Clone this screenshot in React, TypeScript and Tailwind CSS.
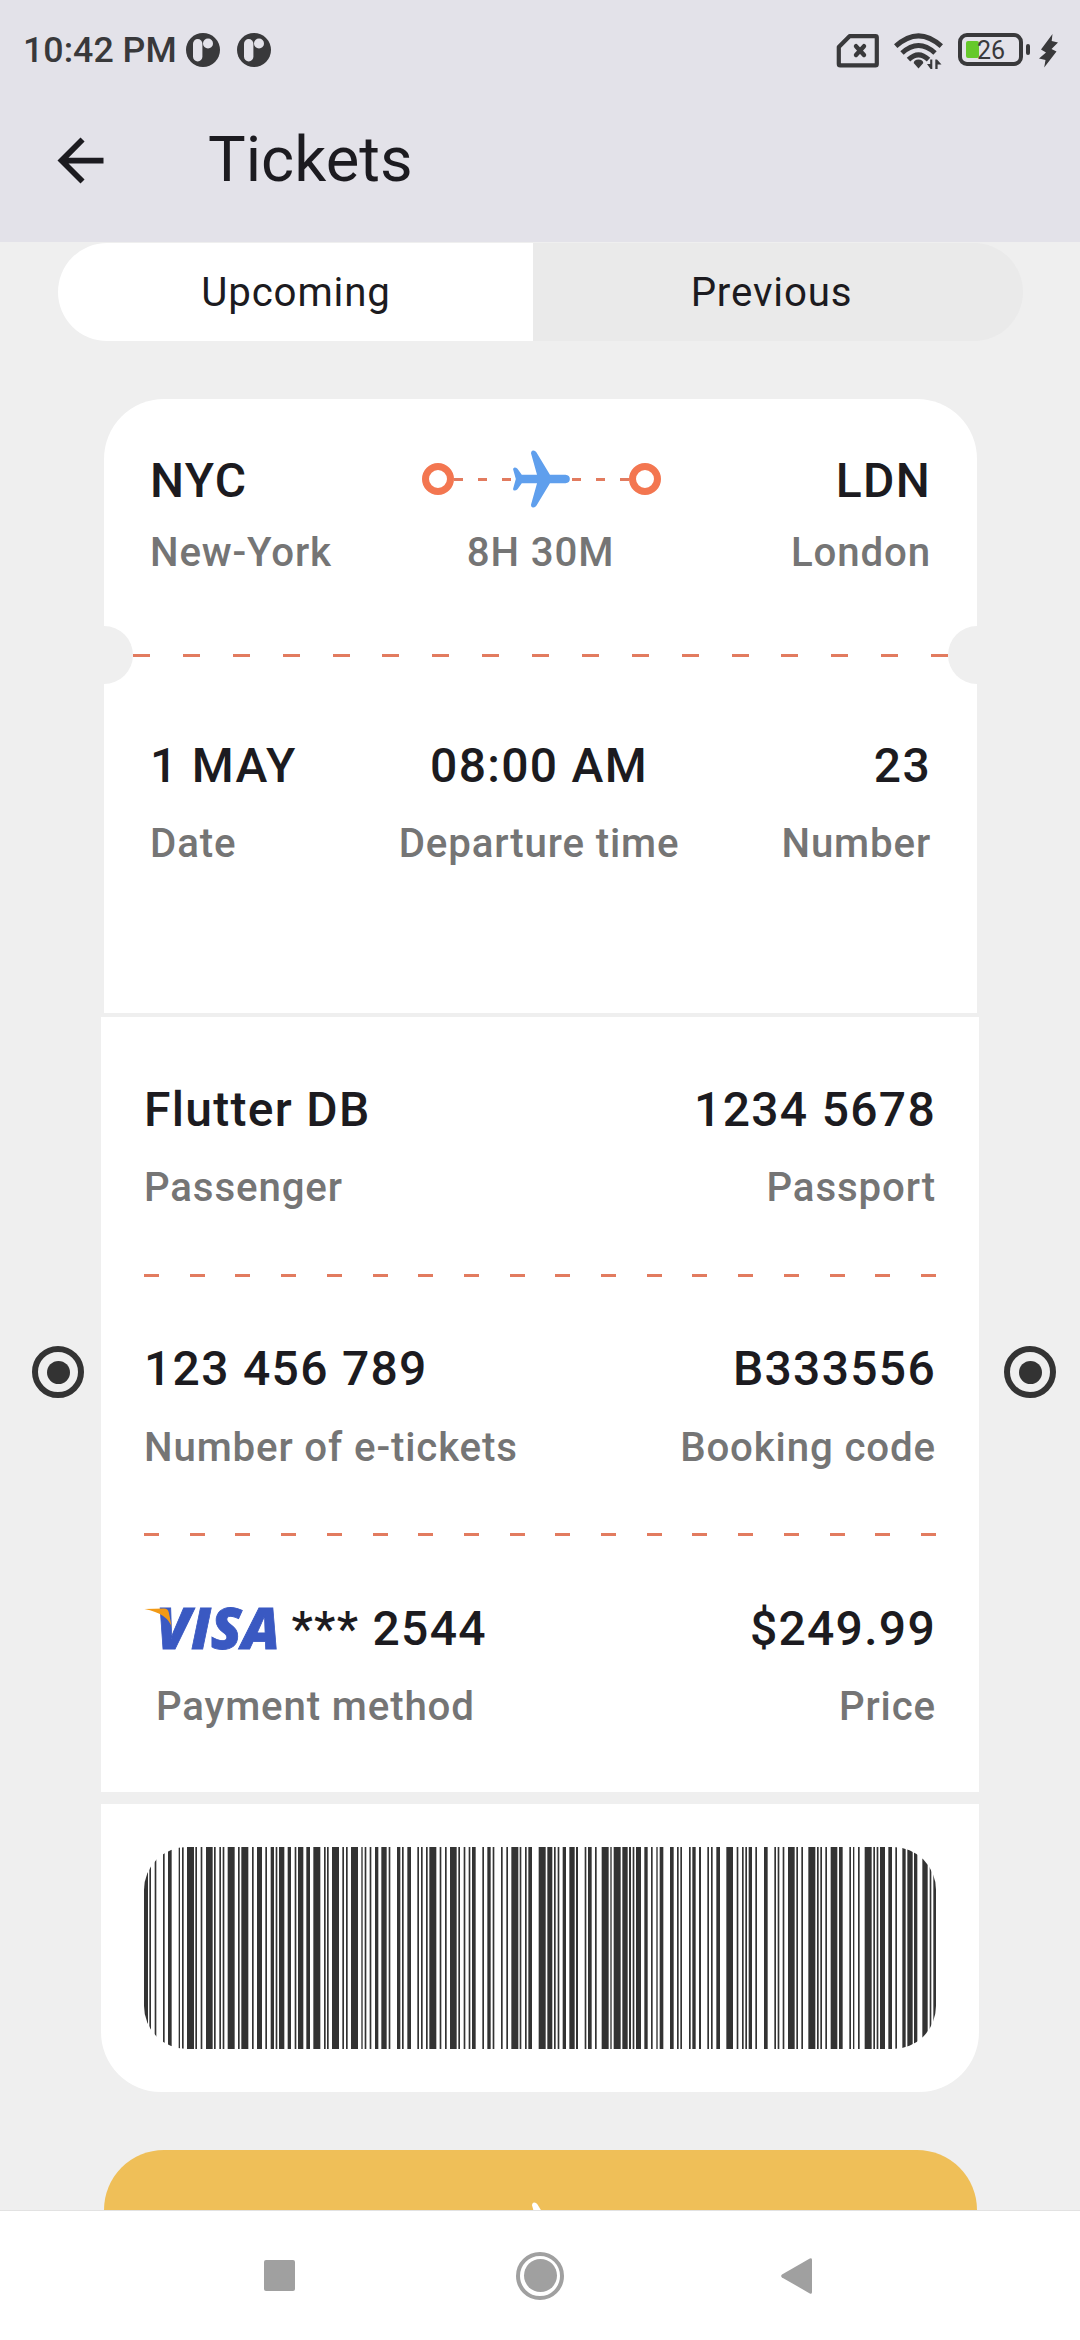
import React from "react";

const PLANE =
  "M158 73 H111 L70 5 Q66 -1 59 0 Q53 3 54 9 L72 73 H26 L13 55 Q9 51 4 51 Q-1 53 0 57 L8 86 L0 115 Q-1 120 4 121 Q9 121 13 117 L26 99 H72 L54 163 Q53 170 59 172 Q66 173 70 167 L111 99 H158 Q171 97 171 86 Q171 74 158 73Z";

/** Barcode bars as [start, width], in thirds of a pixel. */
const BARS: [number, number][] = [
  [0, 12], [16, 5], [32, 5], [57, 5], [72, 11], [104, 4], [114, 5], [129, 21], [154, 5], [170, 5], [186, 20],
  [210, 5], [226, 5], [236, 5], [251, 21], [282, 5], [292, 21], [324, 5], [339, 15], [364, 5], [380, 10],
  [395, 5], [405, 16], [431, 10], [452, 5], [462, 16], [487, 11], [508, 21], [540, 5], [549, 5], [564, 21],
  [595, 5], [606, 5], [621, 21], [652, 4], [662, 5], [677, 5], [693, 10], [712, 16], [734, 5], [759, 10],
  [774, 5], [790, 11], [820, 5], [831, 5], [846, 5], [856, 21], [887, 5], [903, 5], [918, 20], [943, 5],
  [959, 5], [974, 5], [984, 11], [1015, 5], [1030, 10], [1046, 5], [1071, 5], [1087, 5], [1102, 21], [1127, 5],
  [1143, 5], [1153, 11], [1184, 21], [1210, 15], [1230, 5], [1241, 5], [1256, 10], [1276, 16], [1296, 6],
  [1322, 5], [1332, 11], [1353, 5], [1373, 21], [1399, 4], [1409, 21], [1435, 16], [1455, 6], [1466, 5],
  [1476, 15], [1501, 10], [1521, 5], [1537, 4], [1547, 11], [1578, 11], [1599, 5], [1609, 5], [1635, 5],
  [1645, 10], [1665, 6], [1690, 5], [1701, 5], [1717, 11], [1747, 20], [1778, 5], [1794, 5], [1804, 5],
  [1814, 10], [1834, 5], [1860, 11], [1891, 5], [1901, 5], [1916, 5], [1932, 20], [1957, 5], [1972, 5],
  [1993, 21], [2019, 5], [2029, 5], [2044, 5], [2060, 20], [2085, 11], [2116, 5], [2127, 4], [2142, 5],
  [2162, 21], [2188, 5], [2198, 5], [2208, 15], [2233, 11], [2254, 5], [2275, 10], [2290, 16], [2310, 10],
  [2335, 16], [2357, 5], [2368, 10],
];

function Plane({ className }: { className: string }) {
  return (
    <svg viewBox="-0.5 -0.5 172 173" className={className}>
      <path d={PLANE} fill="currentColor" />
    </svg>
  );
}

function NotificationDot() {
  return (
    <svg viewBox="0 0 34 34" className="size-[34px]">
      <circle cx="17" cy="17" r="17" fill="#39393b" />
      <rect x="7" y="6" width="9.4" height="22.5" rx="4.7" fill="#e3e2e9" />
      <circle cx="22" cy="10.5" r="5" fill="#e3e2e9" />
    </svg>
  );
}

function StatusBar() {
  return (
    <div className="flex h-[99px] items-center pl-[23px] pr-[22px] text-[#39393b]">
      <span className="mt-[3px] text-[35.75px] font-medium leading-none">10:42 PM</span>
      <div className="ml-[9px] flex gap-[17px]">
        <NotificationDot />
        <NotificationDot />
      </div>
      <div className="ml-auto flex items-center">
        <svg viewBox="0 0 44 36" className="mt-[3px] h-[36px] w-[44px]" fill="none" stroke="currentColor" strokeWidth="4.2" strokeLinejoin="round">
          <path d="M13.5 3.2H39.5Q40.8 3.2 40.8 4.5V31Q40.8 32.4 39.5 32.4H4.2Q2.8 32.4 2.8 31V14Z" />
          <path d="M20 13.2L28 22M28 13.2L20 22" strokeLinecap="round" strokeWidth="4.4" />
        </svg>
        <svg viewBox="0 0 50 38" className="ml-[14px] mt-[2px] h-[38px] w-[50px]" fill="none" stroke="currentColor" strokeWidth="5">
          <path d="M1.7 14.2Q24.5 -6.5 47.3 14.2" />
          <path d="M8 21Q24.5 6 41 21" />
          <path d="M14.5 27.6Q24.5 18 34.5 27.6" />
          <path d="M24.5 27.5Q29 27.5 29.3 31L24.5 36.5L19.7 31Q20 27.5 24.5 27.5Z" fill="currentColor" stroke="none" />
          <path d="M38.3 27.5V37H36.6L33 32H36.2V27.5ZM41.3 37V27.5H43L47.5 32.5H43.6V37Z" fill="currentColor" stroke="none" />
        </svg>
        <div className="ml-[14px] flex items-center">
          <div className="relative flex h-[33px] w-[65px] items-center rounded-[9px] border-4 border-[#39393b] pl-[4px]">
            <div className="h-[17px] w-[13px] rounded-[2px] bg-[#66c92b]" />
            <span className="absolute left-[15px] top-[2px] text-[25px] leading-[24px]">26</span>
          </div>
          <div className="ml-[3px] h-[11px] w-[4px] rounded-[2px] bg-[#39393b]" />
        </div>
        <svg viewBox="0 0 19 34" className="ml-[9px] mt-[3px] h-[34px] w-[19px]" fill="currentColor">
          <path d="M13.5 0L2 15.5L7 18.5L0 24.5L6.5 26L5.2 33.5L17.5 17.5L12.5 15L19 8.5L12.7 7Z" />
        </svg>
      </div>
    </div>
  );
}

function Header() {
  return (
    <header className="h-[242px] shrink-0 bg-[#e3e2e9]">
      <StatusBar />
      <div className="flex h-[123px] items-center pl-[46px]">
        <svg viewBox="0 0 24 24" className="size-[69px]" fill="#1c1b20">
          <path d="M20 11H7.83l5.59-5.59L12 4l-8 8 8 8 1.41-1.41L7.83 13H20v-2z" />
        </svg>
        <h1 className="mb-[3px] ml-[93px] text-[63.25px] leading-[80px] text-[#1c1b20]">Tickets</h1>
      </div>
    </header>
  );
}

function Tabs() {
  return (
    <div className="mx-[58px] mt-px flex h-[98px] w-[965px] overflow-hidden rounded-full text-[40.25px] tracking-[0.85px]">
      <div className="flex w-[475px] items-center justify-center bg-white pl-px pt-[2px]">Upcoming</div>
      <div className="flex flex-1 items-center justify-center bg-[#eaeaea] pr-[13px] pt-[2px]">Previous</div>
    </div>
  );
}

function Dashes({ count, className, dash }: { count: number; className: string; dash: string }) {
  return (
    <div className={"flex items-center justify-between " + className}>
      {Array.from({ length: count }, (_, i) => (
        <div key={i} className={"bg-[#e27b5f] " + dash} />
      ))}
    </div>
  );
}

const HEAD = "text-[48px] font-medium leading-[56px] tracking-[1.3px] whitespace-nowrap text-[#1c1b20]";
const LABEL = "text-[40.25px] font-medium leading-[48px] tracking-[0.85px] whitespace-nowrap text-[#757575]";

function Field({ head, label, align = "items-start" }: { head: React.ReactNode; label: string; align?: string }) {
  return (
    <div className={"flex flex-col gap-[26.5px] " + align}>
      <div className={HEAD}>{head}</div>
      <div className={LABEL}>{label}</div>
    </div>
  );
}

function Endpoint() {
  return <div className="size-[32px] shrink-0 rounded-full border-[7px] border-[#f37650]" />;
}

function Route() {
  return (
    <div className="flex h-[58px] w-[239px] items-center">
      <Endpoint />
      <Dashes count={3} className="w-[57px]" dash="h-[3px] w-[9px]" />
      <Plane className="mx-[2px] h-[58px] w-[57px] shrink-0" />
      <Dashes count={3} className="w-[57px]" dash="h-[3px] w-[9px]" />
      <Endpoint />
    </div>
  );
}

function Visa() {
  return (
    <svg viewBox="0 0 134 44" className="h-[44px] w-[134px] overflow-visible">
      <text x="12" y="42" textLength="124" lengthAdjust="spacingAndGlyphs" fill="#3a59c2" stroke="#3a59c2" strokeWidth="0.8" className="font-['Open_Sans',sans-serif] text-[56px] font-extrabold italic">
        VISA
      </text>
      <path d="M0.5 2L20 1.6Q24 1.8 24.8 5.5L28 21Q24 6.5 0.5 2Z" fill="#f29a16" />
    </svg>
  );
}

function RadioDot() {
  return (
    <div className="mt-[329px] flex size-[52px] items-center justify-center rounded-full border-[6px] border-[#333333]">
      <div className="size-[23px] rounded-full bg-[#333333]" />
    </div>
  );
}

function RouteCard() {
  return (
    <section className="mx-[104px] mt-[58px] h-[614px] w-[873px] rounded-t-[60px] bg-white">
      <div className="grid h-[227px] grid-cols-[1fr_auto_1fr] px-[46px] pt-[53.5px]">
        <div>
          <div className={HEAD}>NYC</div>
          <div className={LABEL + " mt-[20.5px]"}>New-York</div>
        </div>
        <div className="flex flex-col items-center text-[#5f9fed]">
          <div className="flex h-[56px] items-center pb-[3px] pl-[2px]">
            <Route />
          </div>
          <div className={LABEL + " mt-[20.5px]"}>8H 30M</div>
        </div>
        <div className="flex flex-col items-end">
          <div className={HEAD}>LDN</div>
          <div className={LABEL + " mt-[20.5px]"}>London</div>
        </div>
      </div>
      <div className="flex h-[58px] items-center">
        <div className="h-full w-[29px] rounded-r-full bg-[#efefef]" />
        <Dashes count={17} className="flex-1" dash="h-[3px] w-[17px]" />
        <div className="h-full w-[29px] rounded-l-full bg-[#efefef]" />
      </div>
      <div className="flex justify-between px-[46px] pt-[53.5px]">
        <Field head="1 MAY" label="Date" />
        <Field head="08:00 AM" label="Departure time" align="items-center" />
        <Field head="23" label="Number" align="items-end" />
      </div>
    </section>
  );
}

function DetailsCard() {
  return (
    <div className="mt-[4px] flex items-start justify-between pl-[32px] pr-[24px]">
      <RadioDot />
      <section className="-ml-[8px] h-[775px] w-[878px] bg-white px-[43px] pt-[64.5px]">
        <div className="flex justify-between">
          <Field head="Flutter DB" label="Passenger" />
          <Field head="1234 5678" label="Passport" align="items-end" />
        </div>
        <Dashes count={18} className="mt-[61.5px] mb-[64.5px]" dash="h-[3px] w-[15px]" />
        <div className="flex justify-between">
          <Field head="123 456 789" label="Number of e-tickets" />
          <Field head="B333556" label="Booking code" align="items-end" />
        </div>
        <Dashes count={18} className="mt-[61.5px] mb-[64.5px]" dash="h-[3px] w-[15px]" />
        <div className="flex justify-between">
          <div className="flex flex-col gap-[26.5px]">
            <div className="flex items-center gap-[13.5px]">
              <Visa />
              <span className={HEAD}>*** 2544</span>
            </div>
            <div className={LABEL + " pl-[12px]"}>Payment method</div>
          </div>
          <Field head="$249.99" label="Price" align="items-end" />
        </div>
      </section>
      <RadioDot />
    </div>
  );
}

function BarcodeCard() {
  return (
    <section className="mx-[101px] mt-[12px] h-[288px] rounded-b-[60px] bg-white px-[43px] pt-[43px]">
      <div className="h-[202px] overflow-hidden rounded-[43px]">
        <svg viewBox="0 0 2376 606" preserveAspectRatio="none" className="h-full w-full" fill="#333333">
          {BARS.map(([x, w], i) => (
            <rect key={i} x={x} y="0" width={w} height="606" />
          ))}
        </svg>
      </div>
    </section>
  );
}

function NavBar() {
  return (
    <nav className="flex h-[130px] shrink-0 items-center border-t border-[#e2e2e2] bg-white pl-[264px] text-[#a0a0a0]">
      <div className="size-[31px] rounded-[2px] bg-[#a0a0a0]" />
      <div className="ml-[221px] flex size-[48px] items-center justify-center rounded-full border-4 border-[#a0a0a0]">
        <div className="size-[33px] rounded-full bg-[#a0a0a0]" />
      </div>
      <svg viewBox="0 0 31 36" className="ml-[217px] h-[36px] w-[31px]" fill="currentColor">
        <path d="M28.8 .6Q31 -.6 31 2V34Q31 36.6 28.8 35.4L1 19.5Q-.7 18 1 16.5Z" />
      </svg>
    </nav>
  );
}

export default function App() {
  return (
    <div className="flex h-[2340px] w-[1080px] flex-col overflow-hidden bg-[#efefef] font-['Roboto',sans-serif] text-[#1c1b20]">
      <Header />
      <main className="min-h-0 flex-1 overflow-hidden">
        <Tabs />
        <RouteCard />
        <DetailsCard />
        <BarcodeCard />
        <button className="mx-[104px] mt-[58px] flex h-[161px] w-[873px] items-center justify-center rounded-[60px] bg-[#efbf58] text-white">
          <Plane className="ml-[3px] h-[58px] w-[57px]" />
        </button>
      </main>
      <NavBar />
    </div>
  );
}
